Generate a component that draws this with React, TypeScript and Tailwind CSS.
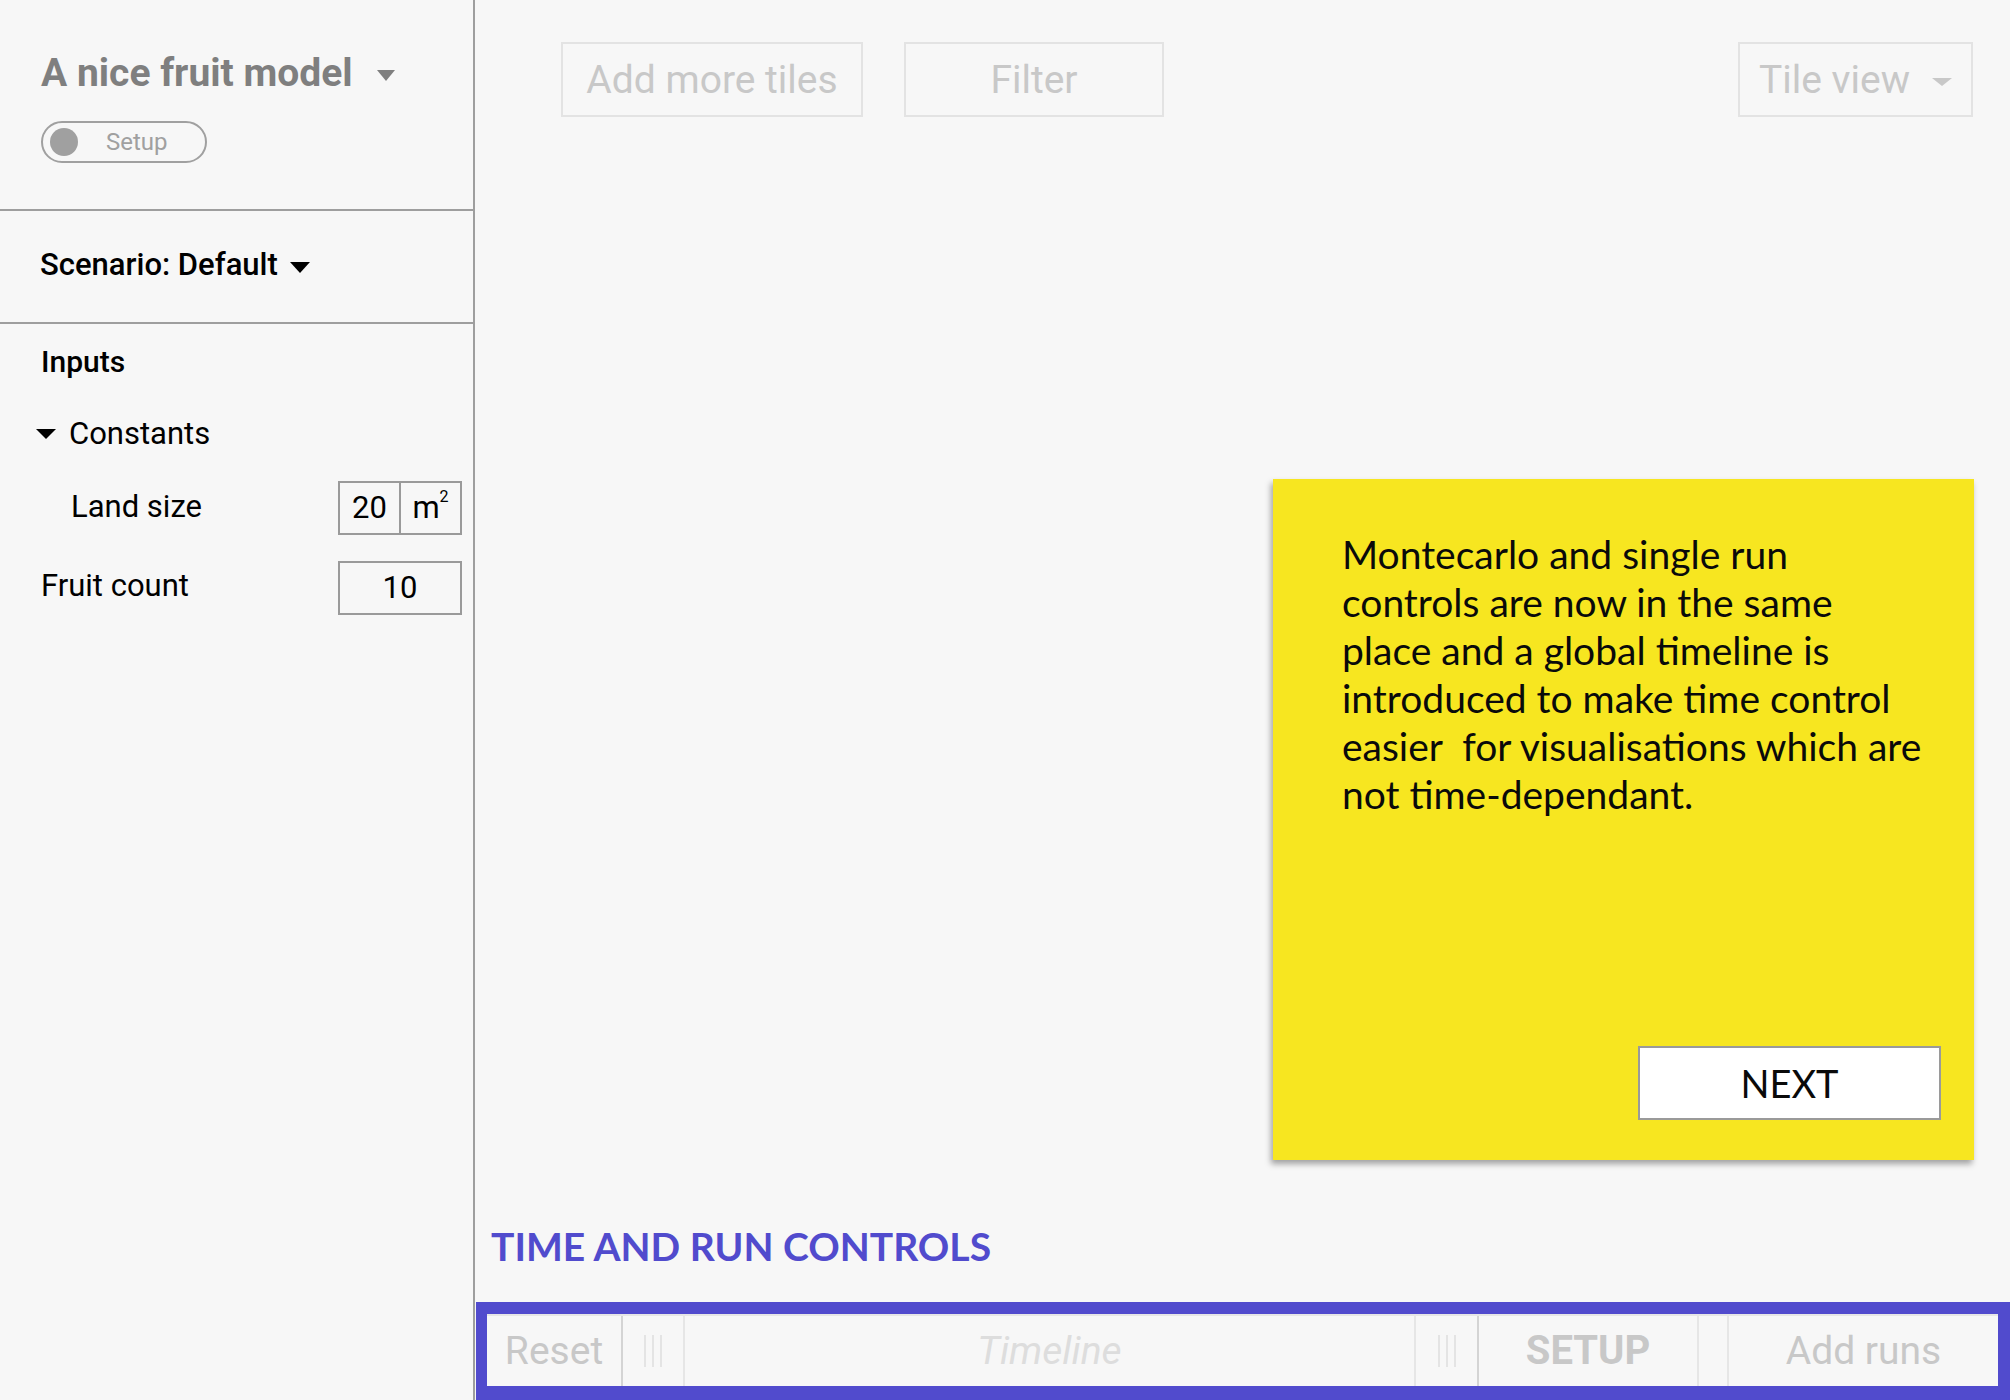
import React from "react";

function Caret({ className }: { className: string }) {
  return (
    <svg className={className} viewBox="0 0 20 11" preserveAspectRatio="none">
      <path d="M0 0 L20 0 L10 11 Z" fill="currentColor" />
    </svg>
  );
}

function Grip() {
  return (
    <div className="flex h-[32px] gap-[6px]">
      <div className="w-[2px] h-full bg-[#e4e4e4]" />
      <div className="w-[2px] h-full bg-[#e4e4e4]" />
      <div className="w-[2px] h-full bg-[#e4e4e4]" />
    </div>
  );
}

export default function App() {
  return (
    <div className="flex h-[1400px] w-[2010px] overflow-hidden bg-[#f7f7f7] font-[Roboto,sans-serif]">
      {/* Sidebar */}
      <aside className="w-[475px] shrink-0 border-r-2 border-[#9e9e9e] flex flex-col">
        <div className="h-[209px] pl-[41px] pt-[53px]">
          <div className="flex items-center h-[40px]">
            <span className="text-[39px] leading-[40px] font-bold text-[#7f7f7f]">A nice fruit model</span>
            <Caret className="ml-[24px] mt-[4px] w-[18px] h-[11px] text-[#7f7f7f]" />
          </div>
          <div className="mt-[28px] flex items-center w-[166px] h-[42px] rounded-full border-2 border-[#a0a0a0] pl-[7px]">
            <div className="w-[28px] h-[28px] rounded-full bg-[#a0a0a0]" />
            <span className="ml-[28px] text-[24px] leading-[24px] text-[#a0a0a0]">Setup</span>
          </div>
        </div>
        <div className="h-[2px] bg-[#9e9e9e]" />
        <div className="h-[111px] pl-[40px] pt-[38px]">
          <div className="flex items-center h-[32px]">
            <span className="text-[31px] leading-[32px] font-medium text-[#000]">Scenario: Default</span>
            <Caret className="ml-[12px] mt-[4px] w-[20px] h-[11px] text-[#000]" />
          </div>
        </div>
        <div className="h-[2px] bg-[#9e9e9e]" />
        <div className="pt-[23px] pr-[11px]">
          <div className="pl-[41px] text-[30px] leading-[30px] font-medium text-[#000]">Inputs</div>
          <div className="mt-[41px] pl-[36px] flex items-center h-[31px]">
            <Caret className="w-[20px] h-[10px] text-[#000]" />
            <span className="ml-[13px] text-[31px] leading-[31px] text-[#000]">Constants</span>
          </div>
          <div className="mt-[32px] flex items-center justify-between h-[54px]">
            <span className="pl-[71px] text-[31px] leading-[31px] text-[#000] -mt-[3px]">Land size</span>
            <div className="flex w-[124px] h-[54px] border-2 border-[#9a9a9a] text-[31px] text-[#000]">
              <div className="w-[61px] flex items-center justify-center border-r-2 border-[#9a9a9a]">20</div>
              <div className="flex-1 flex items-center justify-center">
                m<span className="text-[16px] relative -top-[11px]">2</span>
              </div>
            </div>
          </div>
          <div className="mt-[26px] flex items-center justify-between h-[54px]">
            <span className="pl-[41px] text-[31px] leading-[31px] text-[#000] -mt-[5px]">Fruit count</span>
            <div className="flex items-center justify-center w-[124px] h-[54px] border-2 border-[#9a9a9a] text-[31px] text-[#000]">
              10
            </div>
          </div>
        </div>
      </aside>

      {/* Main */}
      <main className="flex-1 flex flex-col min-w-0">
        <div className="flex items-start pt-[42px] pl-[86px] pr-[37px] h-[117px]">
          <div className="w-[302px] h-[75px] border-2 border-[#e3e3e3] flex items-center justify-center pt-[2px] text-[39px] text-[#c8c8c8]">
            Add more tiles
          </div>
          <div className="ml-[41px] w-[260px] h-[75px] border-2 border-[#e3e3e3] flex items-center justify-center pt-[2px] text-[39px] text-[#c8c8c8]">
            Filter
          </div>
          <div className="ml-auto w-[235px] h-[75px] border-2 border-[#e3e3e3] flex items-center pl-[19px] pr-[19px] pt-[2px] text-[39px] text-[#c8c8c8]">
            <span>Tile view</span>
            <Caret className="ml-auto mt-[2px] w-[20px] h-[8px] text-[#c8c8c8]" />
          </div>
        </div>

        <div className="flex-1 flex justify-end items-end pr-[36px]">
          <div className="w-[701px] h-[681px] bg-[#f7e620] shadow-[-2px_4px_6px_rgba(0,0,0,0.35)] flex flex-col font-[Lato,sans-serif]">
            <p className="pl-[69px] pt-[51px] pr-[20px] text-[39px] leading-[48px] text-[#0a0a0a]">
              Montecarlo and single run
              <br />
              controls are now in the same
              <br />
              place and a global timeline is
              <br />
              introduced to make time control
              <br />
              easier&nbsp; for visualisations which are
              <br />
              not time-dependant.
            </p>
            <div className="mt-auto self-end mr-[33px] mb-[40px] w-[303px] h-[74px] bg-white border-2 border-[#9a9a9a] flex items-center justify-center text-[38px] text-[#0a0a0a]">
              NEXT
            </div>
          </div>
        </div>

        <div className="pt-[66px] pl-[16px] font-[Lato,sans-serif] font-bold text-[39px] leading-[40px] text-[#514bcd]">
          TIME AND RUN CONTROLS
        </div>

        <div className="mt-[36px] ml-px h-[98px] border-t-[12px] border-l-[11px] border-r-[12px] border-b-[14px] border-[#514bcd] bg-[#f7f7f7]">
          <div className="flex h-full border-t-2 border-[#e6e6e6] text-[39px] text-[#c8c8c8]">
            <div className="w-[134px] flex items-center justify-center">Reset</div>
            <div className="w-[2px] bg-[#d4d4d4]" />
            <div className="w-[60px] flex items-center justify-center">
              <Grip />
            </div>
            <div className="w-[2px] bg-[#e6e6e6]" />
            <div className="flex-1 flex items-center justify-center italic text-[#dddddd]">Timeline</div>
            <div className="w-[2px] bg-[#e6e6e6]" />
            <div className="w-[61px] flex items-center justify-center">
              <Grip />
            </div>
            <div className="w-[2px] bg-[#d4d4d4]" />
            <div className="w-[218px] flex items-center justify-center font-bold text-[40px]">SETUP</div>
            <div className="w-[2px] bg-[#e6e6e6]" />
            <div className="w-[28px]" />
            <div className="w-[2px] bg-[#e6e6e6]" />
            <div className="w-[269px] flex items-center justify-center">Add runs</div>
          </div>
        </div>
      </main>
    </div>
  );
}
